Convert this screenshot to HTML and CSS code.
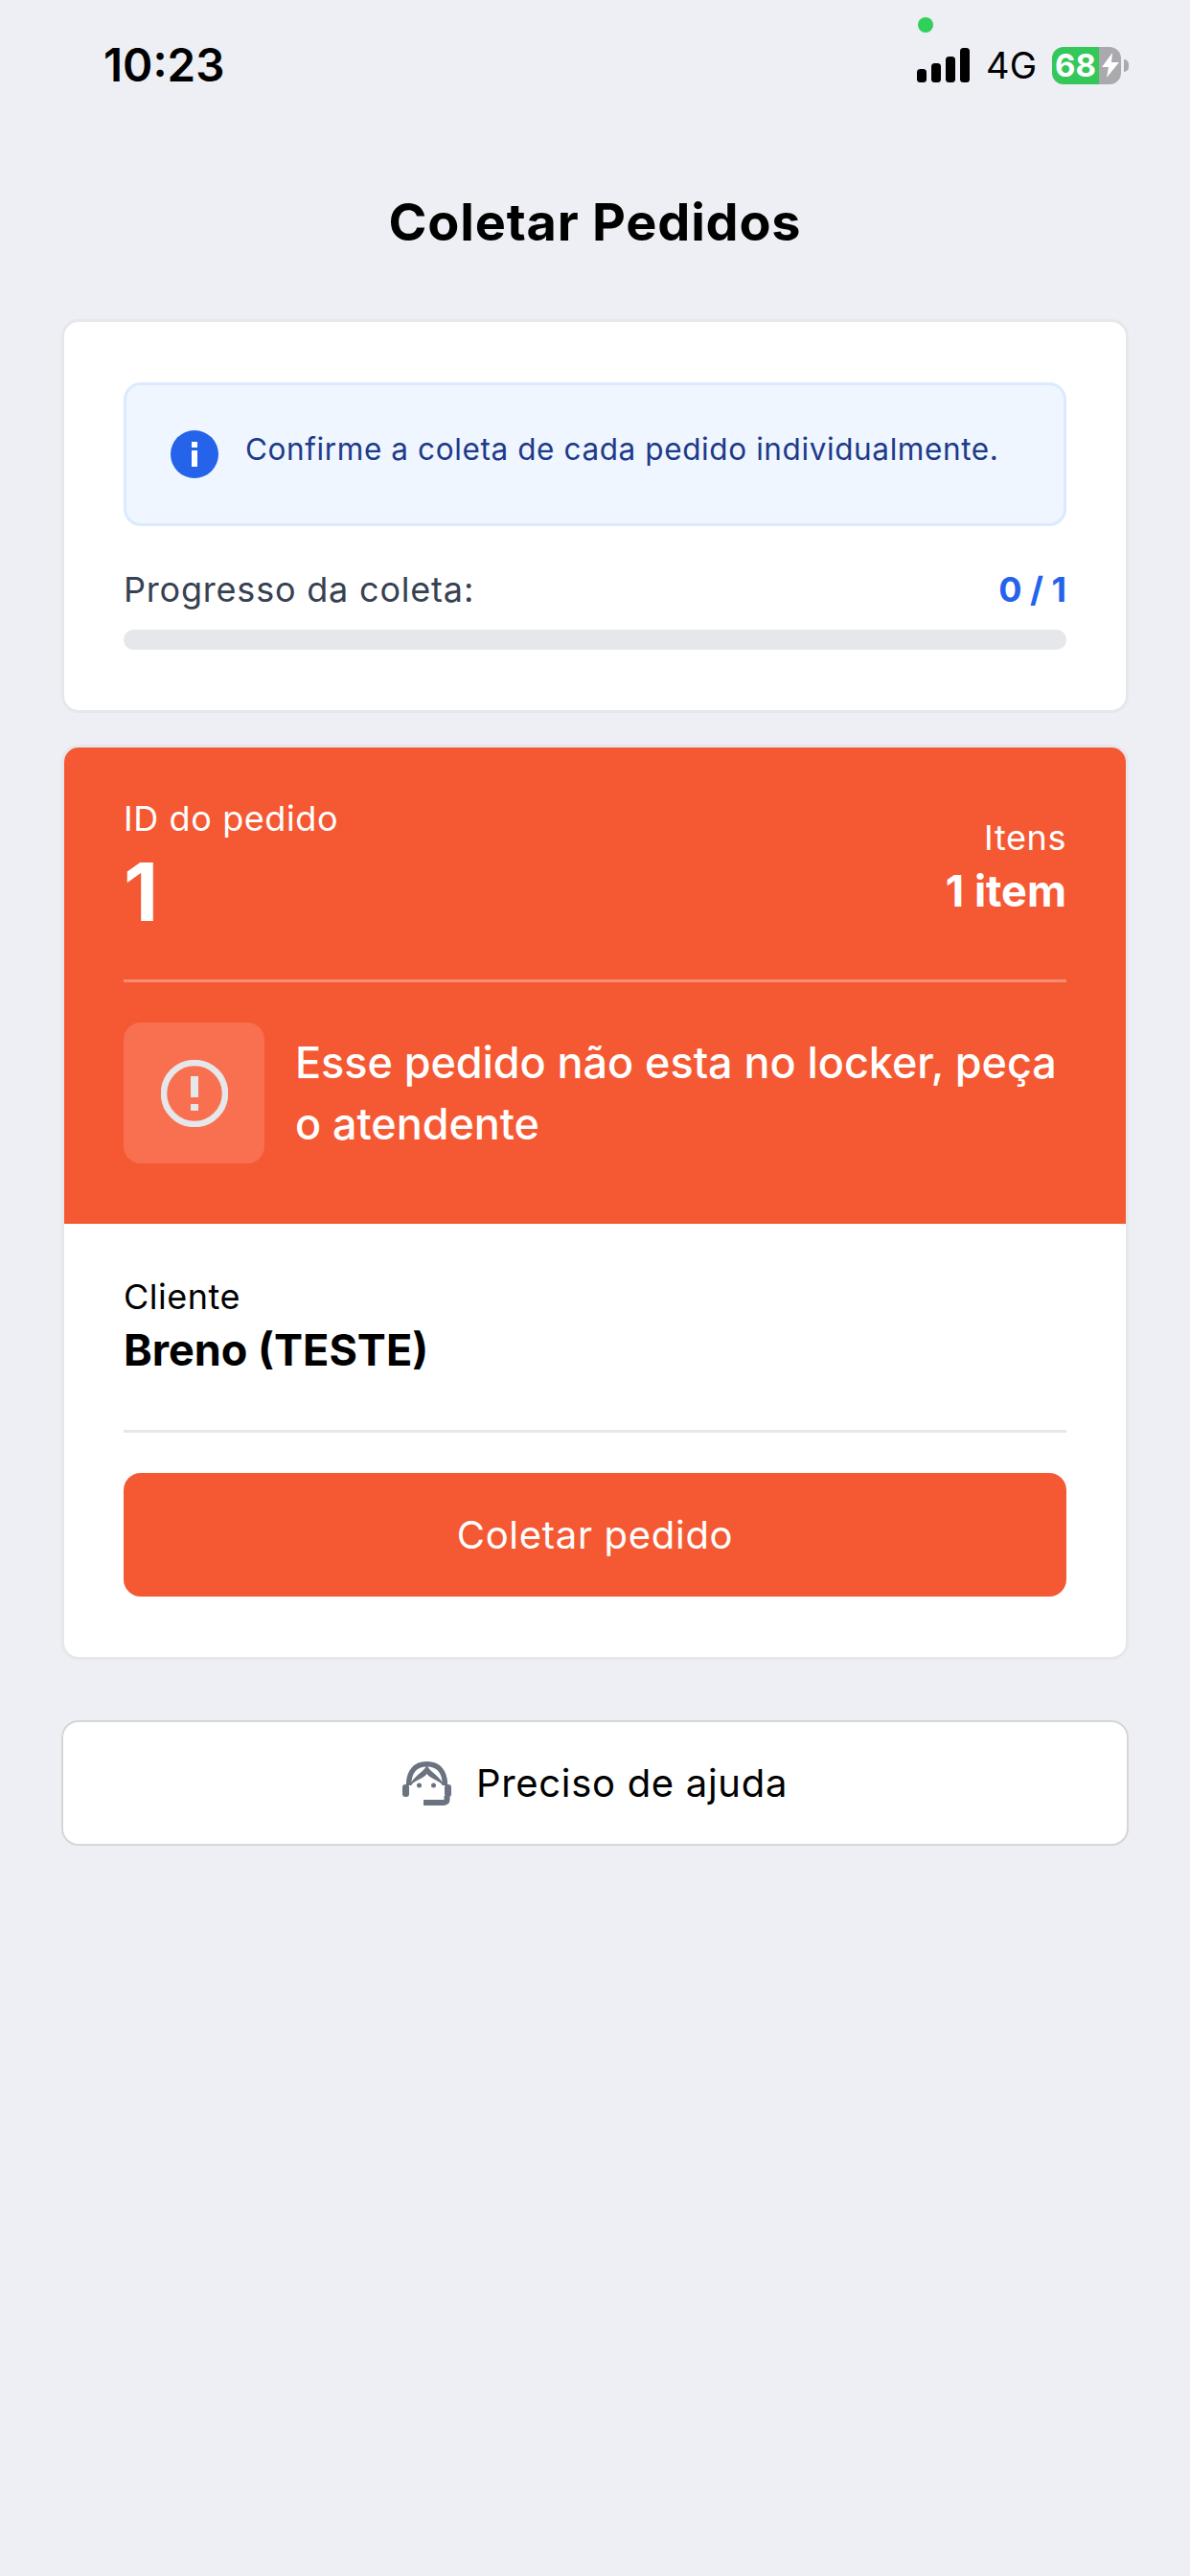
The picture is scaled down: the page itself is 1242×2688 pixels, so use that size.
FILE: index.html
```html
<!DOCTYPE html>
<html lang="pt-BR">
<head>
  <meta charset="UTF-8">
  <title>Coletar Pedidos</title>
  <link rel="stylesheet" href="styles.css">
</head>
<body>
  <div class="status-bar">
    <span class="status-time">10:23</span>
    <div class="status-right">
      <span class="status-dot"></span>
      <svg class="signal" width="55" height="36" viewBox="0 0 55 36">
        <rect x="0" y="22" width="10" height="14" rx="3.5"/>
        <rect x="15" y="16" width="10" height="20" rx="3.5"/>
        <rect x="30" y="9" width="10" height="27" rx="3.5"/>
        <rect x="45" y="0" width="10" height="36" rx="3.5"/>
      </svg>
      <span class="status-net">4G</span>
      <div class="battery">
        <div class="battery-body">
          <span class="battery-level">68</span>
          <span class="battery-rest">
            <svg width="18" height="26" viewBox="0 0 18 26"><path d="M11 0 L0 15 H7 L5 26 L18 10 H10 Z" fill="#fff"/></svg>
          </span>
        </div>
        <span class="battery-cap"></span>
      </div>
    </div>
  </div>

  <h1 class="page-title">Coletar Pedidos</h1>

  <main class="content">
    <section class="card progress-card">
      <div class="info-box">
        <svg class="info-icon" width="50" height="50" viewBox="0 0 50 50">
          <circle cx="25" cy="25" r="25" fill="#2563eb"/>
          <rect x="22" y="12" width="6" height="6" fill="#fff"/>
          <rect x="22" y="21" width="6" height="17" fill="#fff"/>
        </svg>
        <p class="info-text">Confirme a coleta de cada pedido individualmente.</p>
      </div>
      <div class="progress-row">
        <span class="progress-label">Progresso da coleta:</span>
        <span class="progress-count">0 / 1</span>
      </div>
      <div class="progress-track"></div>
    </section>

    <section class="card order-card">
      <div class="order-head">
        <div class="order-ids">
          <div>
            <div class="order-id-label">ID do pedido</div>
            <div class="order-id">1</div>
          </div>
          <div class="order-items">
            <div class="order-items-label">Itens</div>
            <div class="order-items-value">1 item</div>
          </div>
        </div>
        <div class="order-alert">
          <div class="alert-icon">
            <svg width="70" height="70" viewBox="0 0 70 70">
              <circle cx="35" cy="35" r="32" fill="none" stroke="#e5e7eb" stroke-width="6.5"/>
              <rect x="31" y="17" width="8" height="22" fill="#e5e7eb"/>
              <rect x="31" y="46" width="8" height="7" fill="#e5e7eb"/>
            </svg>
          </div>
          <p class="alert-text">Esse pedido não esta no locker, peça o atendente</p>
        </div>
      </div>
      <div class="order-body">
        <div class="client-label">Cliente</div>
        <div class="client-name">Breno (TESTE)</div>
        <hr class="order-line">
        <button class="collect-btn" type="button">Coletar pedido</button>
      </div>
    </section>

    <button class="help-btn" type="button">
      <svg width="51" height="46" viewBox="0 0 51 46">
        <path d="M6.5 25 C6.5 10 14 2.750 25.500 2.750 C37 2.750 44.500 10 44.500 25" fill="none" stroke="#6b7280" stroke-width="5.500"/>
        <path d="M25.500 4 C22 11 15 13 9 22 V25 C13 19 21 19 25.500 13 C30 19 38 19 42 25 V22 C36 13 29 11 25.500 4 Z" fill="#6b7280"/>
        <rect x="0" y="24" width="7" height="13" rx="3" fill="#6b7280"/>
        <rect x="44" y="24" width="7" height="13" rx="3" fill="#6b7280"/>
        <path d="M46.500 36 V40 C46.500 42 45 43 43 43 H22" fill="none" stroke="#6b7280" stroke-width="6"/>
        <circle cx="17.500" cy="25" r="2.500" fill="#6b7280"/>
        <circle cx="32.500" cy="25" r="2.500" fill="#6b7280"/>
      </svg>
      <span>Preciso de ajuda</span>
    </button>
  </main>
</body>
</html>
```

FILE: styles.css
```css
* {
  box-sizing: border-box;
}
html, body {
  margin: 0;
  padding: 0;
}
body {
  width: 1242px;
  min-height: 2688px;
  background-color: #edeff4;
  font-family: Inter, "Liberation Sans", sans-serif;
  color: #000;
}
p {
  margin: 0;
}

.status-bar {
  height: 199px;
  padding: 0 64px 0 108px;
  display: flex;
  justify-content: space-between;
  align-items: flex-start;
}
.status-time {
  margin-top: 40px;
  font-size: 47.500px;
  line-height: 56px;
  font-weight: 600;
}
.status-right {
  position: relative;
  display: flex;
  align-items: center;
  margin-top: 50px;
  height: 36px;
}
.status-dot {
  position: absolute;
  left: 1px;
  top: -32px;
  width: 16px;
  height: 16px;
  border-radius: 50%;
  background-color: #30d158;
}
.signal {
  display: block;
  margin-right: 17px;
}
.status-net {
  font-size: 38px;
  margin-right: 16px;
}
.battery {
  display: flex;
  align-items: center;
}
.battery-body {
  display: flex;
  width: 72px;
  height: 39px;
  border-radius: 12px;
  overflow: hidden;
}
.battery-level {
  width: 49px;
  padding-right: 3px;
  background-color: #34c759;
  color: #fff;
  font-size: 33px;
  font-weight: 700;
  line-height: 39px;
  text-align: right;
}
.battery-rest {
  flex: 1;
  background-color: #a9a9ae;
  display: flex;
  align-items: center;
  justify-content: center;
}
.battery-cap {
  width: 5px;
  height: 13px;
  margin-left: 3px;
  border-radius: 0 6px 6px 0;
  background-color: #a9a9ae;
}

.page-title {
  margin: 0;
  height: 66px;
  font-size: 54px;
  line-height: 66px;
  font-weight: 700;
  letter-spacing: 0.8px;
  text-align: center;
}

.content {
  padding: 68px 64px 0;
  display: flex;
  flex-direction: column;
}

.card {
  background-color: #fff;
  border: 3px solid #e5e7eb;
  border-radius: 18px;
  overflow: hidden;
}

.progress-card {
  padding: 63px 62px 63px;
}
.info-box {
  display: flex;
  align-items: center;
  gap: 28px;
  height: 150px;
  padding: 0 46px;
  background-color: #eff6ff;
  border: 3px solid #dbeafe;
  border-radius: 18px;
}
.info-icon {
  flex-shrink: 0;
}
.info-text {
  margin-bottom: 12px;
  font-size: 31.500px;
  letter-spacing: 0.6px;
  color: #1e3a8a;
}
.progress-row {
  display: flex;
  justify-content: space-between;
  align-items: center;
  margin-top: 42px;
  height: 48px;
}
.progress-label {
  font-size: 36px;
  letter-spacing: 0.8px;
  color: #374151;
}
.progress-count {
  font-size: 36px;
  font-weight: 700;
  color: #2563eb;
}
.progress-track {
  margin-top: 18px;
  height: 21px;
  border-radius: 11px;
  background-color: #e5e7eb;
}

.order-card {
  margin-top: 33px;
}
.order-head {
  background-color: #f55933;
  color: #fff;
  padding: 50px 62px 63px;
}
.order-ids {
  display: flex;
  justify-content: space-between;
  align-items: flex-start;
  padding-bottom: 49px;
  border-bottom: 3px solid #fa8e73;
}
.order-id-label {
  font-size: 36px;
  line-height: 48px;
  letter-spacing: 0.6px;
}
.order-id {
  margin-top: 11px;
  font-size: 84px;
  line-height: 84px;
  font-weight: 700;
}
.order-items {
  text-align: right;
  padding-top: 20px;
}
.order-items-label {
  font-size: 36px;
  line-height: 48px;
  letter-spacing: 0.6px;
}
.order-items-value {
  margin-top: 2px;
  font-size: 45px;
  line-height: 60px;
  font-weight: 700;
}
.order-alert {
  display: flex;
  align-items: center;
  gap: 32px;
  margin-top: 42px;
}
.alert-icon {
  flex-shrink: 0;
  width: 147px;
  height: 147px;
  border-radius: 18px;
  background-color: #f87050;
  display: flex;
  align-items: center;
  justify-content: center;
}
.alert-text {
  font-size: 45px;
  line-height: 64px;
  font-weight: 500;
  letter-spacing: -0.07px;
}

.order-body {
  padding: 52px 62px 63px;
}
.client-label {
  font-size: 36px;
  line-height: 48px;
  letter-spacing: 0.5px;
}
.client-name {
  margin-top: 2px;
  font-size: 45px;
  line-height: 60px;
  font-weight: 700;
}
.order-line {
  margin: 53px 0 42px;
  border: 0;
  border-top: 3px solid #e5e7eb;
}
.collect-btn {
  display: block;
  width: 100%;
  height: 129px;
  border: 0;
  border-radius: 18px;
  background-color: #f55933;
  color: #fff;
  font-family: inherit;
  font-size: 40px;
  letter-spacing: 0.7px;
}

.help-btn {
  margin-top: 63px;
  height: 131px;
  display: flex;
  align-items: center;
  justify-content: center;
  gap: 26px;
  background-color: #fff;
  border: 2px solid #d6d6d6;
  border-radius: 18px;
  color: #000;
  font-family: inherit;
  font-size: 40px;
  letter-spacing: 0.7px;
}
```
